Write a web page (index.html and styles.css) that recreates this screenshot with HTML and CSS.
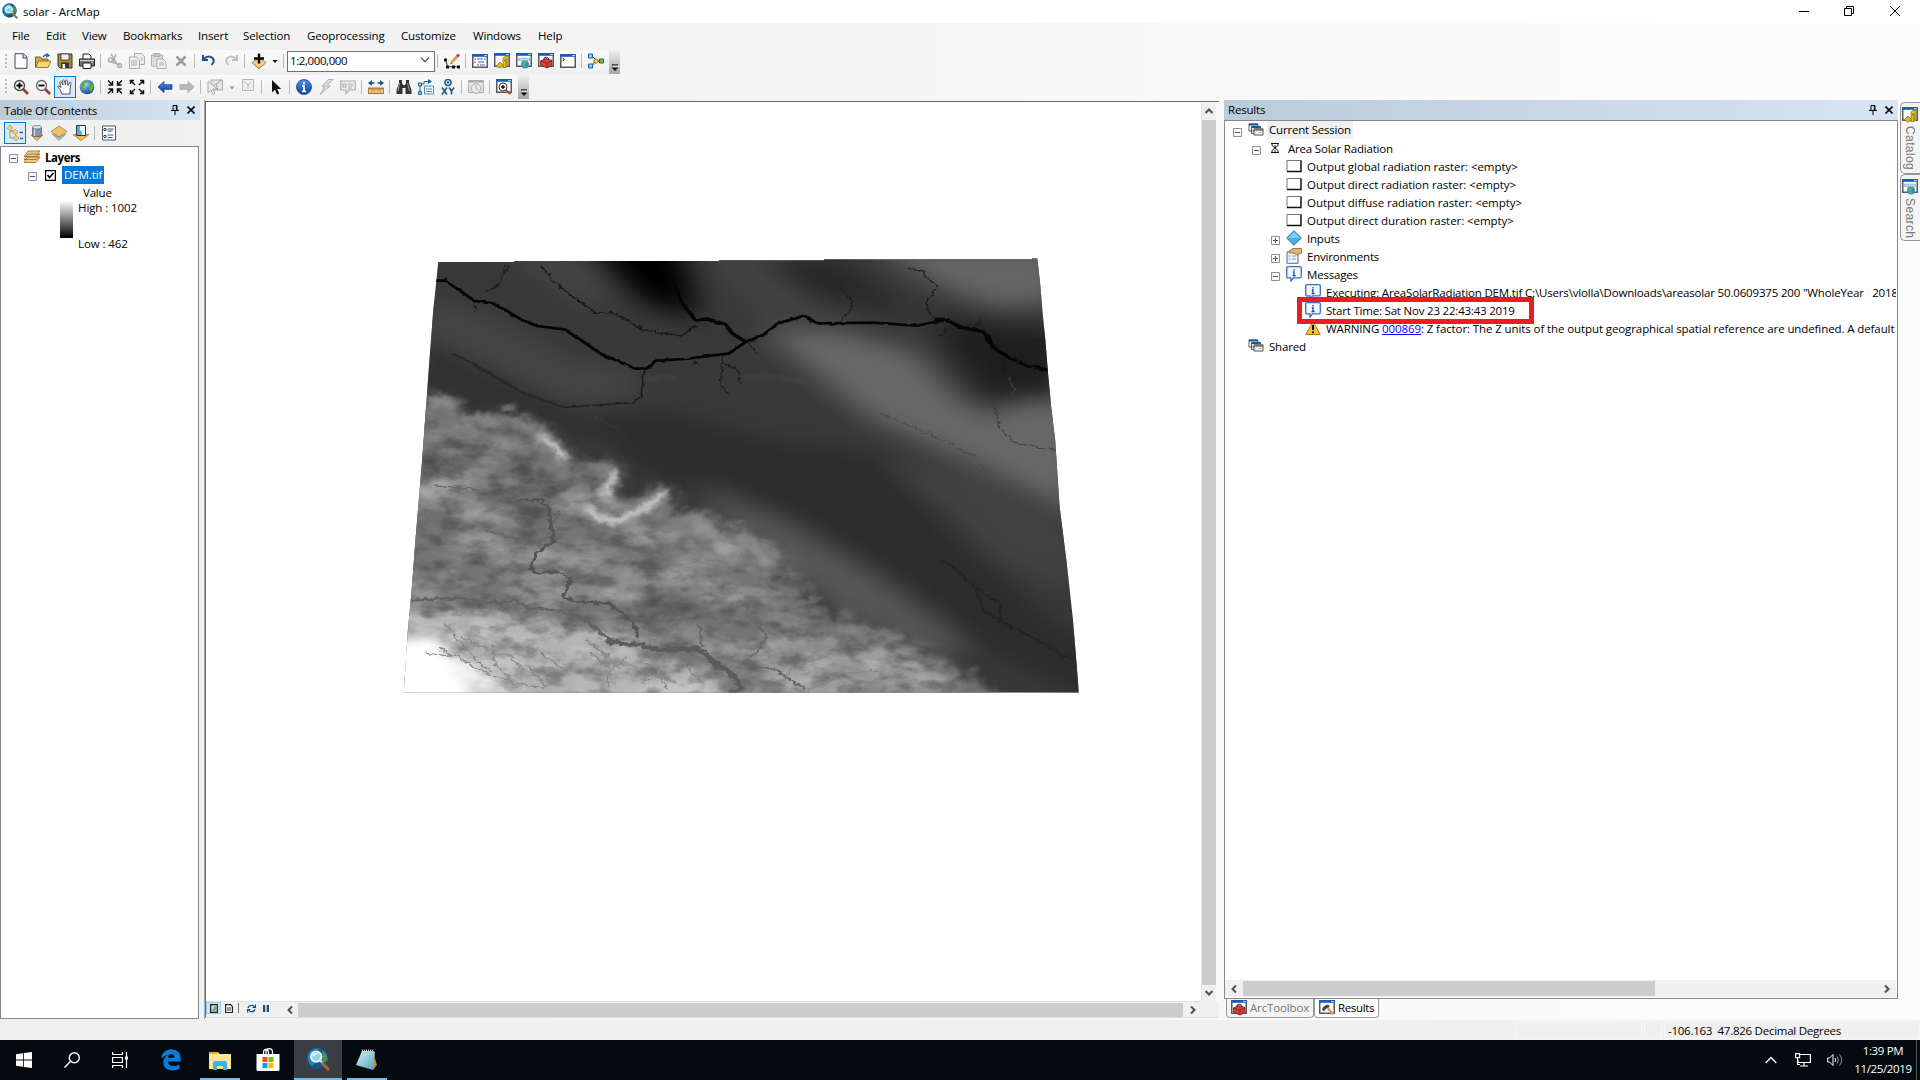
FILE: index.html
```html
<!DOCTYPE html>
<html lang="en">
<head>
<meta charset="utf-8">
<title>solar - ArcMap</title>
<link rel="stylesheet" href="styles.css">
</head>
<body>
<svg class="defs" width="0" height="0">
<defs>
<radialGradient id="sea" cx=".35" cy=".3" r=".8"><stop offset="0" stop-color="#b5def7"/><stop offset=".5" stop-color="#3f83cc"/><stop offset="1" stop-color="#153f86"/></radialGradient>
<linearGradient id="blue" x1="0" y1="0" x2="0" y2="1"><stop offset="0" stop-color="#4d8ee6"/><stop offset="1" stop-color="#0d3fa8"/></linearGradient>
<linearGradient id="note" x1="0" y1="0" x2="1" y2="1"><stop offset="0" stop-color="#d8f0f4"/><stop offset="1" stop-color="#4aa4b8"/></linearGradient>
<symbol id="arcmap" viewBox="0 0 16 16"><circle cx="7.500" cy="7.500" r="7.200" fill="#12588f"/><path d="M2 4q3-4 7-3l-2 3 1 3-3 1 1 3-2 2q-4-4-2-9z" fill="#2386b0"/><path d="M11 2q4 3 3 7l-3 2z" fill="#3f9a48"/><circle cx="6.800" cy="6.400" r="3.500" fill="#8fd0e6" stroke="#e8f2f6" stroke-width="1.300"/><path d="M4.800 6q1-2 3-1.500" stroke="#fff" fill="none"/><path d="M9.500 9l1.500 1.700" stroke="#ddd" stroke-width="1.600"/><path d="M11 11l3.800 3.800" stroke="#b5642c" stroke-width="2" stroke-linecap="round"/></symbol>
<symbol id="globe" viewBox="0 0 16 16"><circle cx="8" cy="8" r="7.300" fill="url(#sea)"/><path d="M3 3.500q3-2.500 5-2l.5 2-3 1 .5 2-2.500 1.500.5 3-1.500 0q-2-4 .5-7.500zM10 6l3.500-1.500 1.500 3q0 3-3 5.500l-2-3z" fill="#6aa82e"/></symbol>
<symbol id="win" viewBox="0 0 16 14"><path d="M.75.75h14.5v12.5H.75z" fill="#fff" stroke="#5a5a5a" stroke-width="1.500"/><path d="M0 0h16v2.800H0z" fill="#1c5bb5"/><path d="M12 1h3v1h-3z" fill="#a9cdf5"/></symbol>
<symbol id="catalog" viewBox="0 0 16 16"><use href="#win" width="16" height="14"/><path d="M9 5l2-1.500h3V13l-2 1.500H9z" fill="#e2c420" stroke="#8a7508" stroke-width=".7"/><path d="M12 6v8M10 7.500h1.500" stroke="#7c6808"/><path d="M2 13l4-4 4 4-4 2z" fill="#d6bc1c" stroke="#7c6808" stroke-width=".7"/></symbol>
<symbol id="search" viewBox="0 0 16 16"><use href="#win" width="16" height="14"/><path d="M2 5h12v2.500H2z" fill="#b9d5ee" stroke="#799cbd" stroke-width=".5"/><circle cx="9" cy="11.500" r="4" fill="#2f8fc2"/><path d="M6 11q2-4 5-2l-2 2 1 3q-3 1-4-3z" fill="#5cb858"/></symbol>
<symbol id="toolbox" viewBox="0 0 16 16"><use href="#win" width="16" height="14"/><path d="M2.500 8l5.500-2.500 6 2v5L9 15l-6.500-3z" fill="#d0463c" stroke="#7b1712" stroke-width=".8"/><path d="M2.500 8L9 10.200 14 7.500M9 10.500V15" fill="none" stroke="#7b1712" stroke-width=".8"/><path d="M6 7V5l2.500-.8 2 1V7" fill="none" stroke="#661410"/></symbol>
<symbol id="results" viewBox="0 0 16 16"><use href="#win" width="16" height="14"/><path d="M8 7l6 7.500" stroke="#d29a5c" stroke-width="2.600"/><path d="M3 9.500q1-4 6-5l2 2-4 2-2 3z" fill="#444"/></symbol>
<symbol id="stack" viewBox="0 0 16 16"><path d="M1 2h9v7H1zM3.500 4.500h9v7h-9z" fill="#fff" stroke="#555"/><path d="M1 1.500h9v2H1zM3.500 4h9v2h-9z" fill="#1b5799"/><path d="M6 7h9v6H6z" fill="#eee" stroke="#555"/><path d="M6 6.500h9v2H6zM11 10.500h2" fill="#777" stroke="#777" stroke-width=".7"/></symbol>
<symbol id="msg" viewBox="0 0 16 16"><path d="M2 .7h12q1.300 0 1.300 1.300v8.500q0 1.300-1.300 1.300H7.500L5 15v-3.200H2Q.7 11.800.7 10.500V2Q.7.700 2 .7z" fill="#f4f9ff" stroke="#356fc0" stroke-width="1.300"/><path d="M8 3v1.500M6.800 6H8v3.500M6.500 9.700h3.200" stroke="#174a9a" stroke-width="1.300" fill="none"/></symbol>
<symbol id="minus" viewBox="0 0 9 9"><path d="M.5.5h8v8h-8z" fill="#fafafa" stroke="#919191"/><path d="M2 4.500h5" stroke="#3c55a8"/></symbol>
<symbol id="plus" viewBox="0 0 9 9"><path d="M.5.5h8v8h-8z" fill="#fafafa" stroke="#919191"/><path d="M2 4.500h5M4.500 2v5" stroke="#3c55a8"/></symbol>
<symbol id="blank" viewBox="0 0 16 16"><path d="M1 2.500h14v11H1z" fill="#fff" stroke="#777"/><path d="M1 13.500h14v-11" fill="none" stroke="#111" stroke-width="1.300"/></symbol>
<symbol id="pin" viewBox="0 0 8 10"><path d="M2 .5h4v5H2zM0 5.500h8M4 6v4M5.300 1v4" stroke="#000" fill="none"/></symbol>
<symbol id="close" viewBox="0 0 8 8"><path d="M.5.5l7 7M7.500.5l-7 7" stroke="#000" stroke-width="1.600"/></symbol>
<symbol id="left" viewBox="0 0 6 8"><path d="M5 .5L1.500 4 5 7.500" fill="none" stroke="#505050" stroke-width="2"/></symbol>
<symbol id="right" viewBox="0 0 6 8"><path d="M1 .5L4.500 4 1 7.500" fill="none" stroke="#505050" stroke-width="2"/></symbol>
<symbol id="diamond" viewBox="0 0 16 16"><path d="M1 9l7 6.500L15 9 8 12z" fill="#b8b8b8" stroke="#777" stroke-width=".6"/><path d="M0 6.500L8 1l8 5.500L8 12z" fill="#f0c068" stroke="#9a7430" stroke-width=".7"/></symbol>
<symbol id="kite" viewBox="0 0 16 16"><path d="M1 9.500l7-4.500 7 4.500-7 6z" fill="#f3cf85" stroke="#9a7430" stroke-width=".8"/><path d="M2.500 11L8 15.500l5.500-4.500" fill="none" stroke="#b98430"/></symbol>
<symbol id="overflow" viewBox="0 0 11 24"><path d="M3 15h6" stroke="#111" stroke-width="1.300"/><path d="M2.500 17.500h7L6 21z" fill="#111"/><path d="M4 16h6" stroke="#fff" stroke-width=".7"/></symbol>
</defs>
</svg>
<div class="app">
<header class="title"><svg width="16" height="16"><use href="#arcmap"/></svg><span class="title-text">solar - ArcMap</span>
<div class="window-buttons"><svg width="120" height="20" viewBox="0 0 120 20" fill="none" stroke="#000"><path d="M14 10.500h10M59.500 7.500h7v7h-7zM61.500 7V5.500h7v7H67M105 5l10 10M115 5l-10 10"/></svg></div></header>
<nav class="menu"><span>File</span><span>Edit</span><span>View</span><span>Bookmarks</span><span>Insert</span><span>Selection</span><span>Geoprocessing</span><span>Customize</span><span>Windows</span><span>Help</span></nav>
<div class="toolbar tb-standard">
<i class="grip"></i>
<b class="tool"><svg viewBox="0 0 16 16"><path d="M2 .7h8.500L14 4v11.300H2z" fill="#fdfdff" stroke="#3e4a5e"/><path d="M10 1v4h4" fill="#cbdcf2" stroke="#3e4a5e"/></svg></b>
<b class="tool"><svg viewBox="0 0 16 16"><path d="M.5 14V4h5l1.500 2h6v3" fill="#d6a93c" stroke="#80601a"/><path d="M.7 14.500L3.500 8H16l-3 6.500z" fill="#f5d678" stroke="#80601a" stroke-width=".8"/><path d="M8 4q2-3 5-1.500M11.500.5l2.500 2-3 1.500" stroke="#22649e" fill="none" stroke-width="1.300"/></svg></b>
<b class="tool"><svg viewBox="0 0 16 16"><path d="M1 1h14v14H3l-2-2z" fill="#a78c30" stroke="#333"/><path d="M4 1h8v6H4z" fill="#f2f2f2" stroke="#333" stroke-width=".8"/><path d="M4 9.500h8V15H4z" fill="#333"/><path d="M5.500 11h2.500v4H5.500z" fill="#fff"/></svg></b>
<b class="tool"><svg viewBox="0 0 16 16"><path d="M4 6V1h6l2 2v3" fill="#fff" stroke="#222"/><path d="M.5 6h15v7H.5z" fill="#777" stroke="#222"/><path d="M4 10h8v5.500H4z" fill="#fff" stroke="#222"/><path d="M1 7.500h14" stroke="#ddd"/><path d="M12 9.500h2" stroke="#8e8"/></svg></b>
<i class="sep"></i>
<b class="tool"><svg viewBox="0 0 16 16" fill="none" stroke="#b0b0b0" stroke-width="1.500"><path d="M4 1l6 10M9 1L6 9M2 8l11 4"/><circle cx="3.500" cy="7" r="2"/><circle cx="12.500" cy="12.500" r="2"/></svg></b>
<b class="tool"><svg viewBox="0 0 16 16" fill="#eee" stroke="#adadad"><path d="M5.500.5h7l3 3v8h-10z"/><path d="M.5 4h7l3 3v8.500H.5zM2 8h6M2 10h6M2 12h6M12 5h2M12 7h2"/></svg></b>
<b class="tool"><svg viewBox="0 0 16 16" fill="#ddd" stroke="#adadad"><path d="M.5 2h11v11H.5zM3 .5h6v3H3z"/><path d="M6 6h6l3 3v6.500H6zM8 10h5M8 12h5" fill="#eee"/></svg></b>
<b class="tool"><svg viewBox="0 0 16 16"><path d="M3.500 3.500l9 9M12.500 3.500l-9 9" stroke="#9b9b9b" stroke-width="2.600"/></svg></b>
<i class="sep"></i>
<b class="tool"><svg viewBox="0 0 16 16" fill="none" stroke="#1a5590" stroke-width="2"><path d="M2.500 6q5-4.500 9-1 3 3-1 7M2 2v5h5"/></svg></b>
<b class="tool"><svg viewBox="0 0 16 16" fill="none" stroke="#c2c2c2" stroke-width="2"><path d="M13.500 6q-5-4.500-9-1-3 3 1 7M14 2v5H9"/></svg></b>
<i class="sep"></i>
<b class="tool"><svg viewBox="0 0 16 16"><use href="#kite"/><path d="M8 .5v10M3 5.500h10" stroke="#000" stroke-width="2.400"/></svg></b>
<b class="drop"><svg viewBox="0 0 8 16"><path d="M1.500 7h5L4 10z" fill="#000"/></svg></b>
<i class="sep sep-wide"></i>
<div class="combo"><span>1:2,000,000</span><svg width="10" height="6" viewBox="0 0 10 6"><path d="M1 .7l4 4 4-4" fill="none" stroke="#444" stroke-width="1.200"/></svg></div>
<i class="sep"></i>
<b class="tool"><svg viewBox="0 0 16 16"><path d="M2 7l1.500 7 6-.5L14 14" fill="none" stroke="#333"/><path d="M0 5.500h3v3H0zM2 12.500h3v3H2zM8 12.500h3v3H8zM13 12.500h3v3h-3z" fill="#111"/><path d="M7.500 9.500l6-6.500" stroke="#d7a13c" stroke-width="2.600"/><path d="M13 3.500l2-2" stroke="#b54040" stroke-width="2.600"/><path d="M6 11.500l1-2 1 1z" fill="#222"/></svg></b>
<i class="sep"></i>
<b class="tool"><svg viewBox="0 0 16 16"><use href="#win" y="1" width="16" height="14"/><path d="M2 6h2M2 9h2M5 12h2" stroke="#c33"/><path d="M5 6h6M6 9h6M8 12h5M12 6h2" stroke="#2866b4"/></svg></b>
<b class="tool"><svg><use href="#catalog"/></svg></b>
<b class="tool"><svg><use href="#search"/></svg></b>
<b class="tool"><svg><use href="#toolbox"/></svg></b>
<b class="tool"><svg viewBox="0 0 16 16"><use href="#win" y="1" width="16" height="14"/><path d="M2.500 5l2 1.500-2 1.500" fill="none" stroke="#111"/></svg></b>
<i class="sep"></i>
<b class="tool"><svg viewBox="0 0 16 16"><path d="M4 3l4 4-4 6M8 8h4" fill="none" stroke="#333"/><path d="M.5 1h4v4h-4zM.5 11h4v4h-4z" fill="#8ed0f3" stroke="#1763a6"/><path d="M5.500 8L8 5.500 10.500 8 8 10.500z" fill="#f4d343" stroke="#8e6914"/><path d="M11.500 6h4v4h-4z" fill="#69bd44" stroke="#2b6e19"/></svg></b>
<i class="overflow"><svg width="11" height="24"><use href="#overflow"/></svg></i>
</div>
<div class="toolbar tb-tools">
<i class="grip"></i>
<b class="tool"><svg viewBox="0 0 16 16"><path d="M9.500 9.500L15 15" stroke="#9b3c28" stroke-width="2.600"/><circle cx="6.500" cy="6.500" r="5" fill="#f4f4f4" stroke="#444" stroke-width="1.300"/><path d="M3.500 6.500h6M6.500 3.500v6" stroke="#000" stroke-width="1.800"/></svg></b>
<b class="tool"><svg viewBox="0 0 16 16"><path d="M9.500 9.500L15 15" stroke="#9b3c28" stroke-width="2.600"/><circle cx="6.500" cy="6.500" r="5" fill="#f4f4f4" stroke="#666" stroke-width="1.300"/><path d="M3.500 6.500h6" stroke="#000" stroke-width="1.800"/></svg></b>
<b class="tool on"><svg viewBox="0 0 16 16"><path d="M5 15L3 10.500.700 8q0-1.500 1.500-1L4 8.500 2.800 3q.7-1.500 1.700 0L6 6 5.500 1.500q.8-1.200 1.800 0L8.500 6l.3-4.500q1-1 1.700.3L11 6.500l1.500-3q1.300-.7 1.500.7L13 10v5z" fill="#fff" stroke="#444" stroke-width=".9"/></svg></b>
<b class="tool"><svg><use href="#globe"/></svg></b>
<i class="sep"></i>
<b class="tool"><svg viewBox="0 0 16 16" stroke="#111" stroke-width="1.500" fill="none"><path d="M1 1.500l4 4M5.500 2v4h-4M15 1.500l-4 4M10.500 2v4h4M1 14.500l4-4M5.500 14v-4h-4M15 14.500l-4-4M10.500 14v-4h4"/></svg></b>
<b class="tool"><svg viewBox="0 0 16 16" stroke="#111" stroke-width="1.500" fill="none"><path d="M2 2l4 4M1.500 5V1.500H5M14 2l-4 4M14.500 5V1.500H11M2 14l4-4M1.500 11v3.500H5M14 14l-4-4M14.500 11v3.500H11"/></svg></b>
<i class="sep"></i>
<b class="tool"><svg viewBox="0 0 16 16"><path d="M1 8l6-5.500v3.200h8v4.600H7v3.200z" fill="url(#blue)" stroke="#123c94" stroke-width=".8"/></svg></b>
<b class="tool"><svg viewBox="0 0 16 16"><path d="M15 8L9 2.500v3.200H1v4.600h8v3.200z" fill="#b7b7b7" stroke="#a3a3a3" stroke-width=".8"/></svg></b>
<i class="sep"></i>
<b class="tool"><svg viewBox="0 0 16 16" fill="#e5e5e5" stroke="#aaa"><path d="M4 1h11.500v10H4zM4 8l11-7M9 5l2 6"/><path d="M1 2v12l3-3 2 4.500 2-1L6 10h4z" fill="#eee"/></svg></b>
<b class="drop drop-wide"><svg viewBox="0 0 8 16"><path d="M1.500 7.500h5l-2.500 3z" fill="#999"/></svg></b>
<b class="tool"><svg viewBox="0 0 16 16" fill="#efefef" stroke="#b5b5b5"><path d="M2.500.5h11v11h-11zM4 2l4 4 3-3M8 6v4"/></svg></b>
<i class="sep"></i>
<b class="tool"><svg viewBox="0 0 16 16"><path d="M4 1v12.500l3-2.800 2 4.800 2.200-1-2-4.500h4z" fill="#111"/></svg></b>
<i class="sep"></i>
<b class="tool"><svg viewBox="0 0 16 16"><circle cx="8" cy="8" r="7.500" fill="url(#blue)" stroke="#143f8c" stroke-width=".8"/><path d="M8 3v2.200M6 7h2v5M6 12.300h4" stroke="#fff" stroke-width="1.800" fill="none"/></svg></b>
<b class="tool"><svg viewBox="0 0 16 16"><path d="M10 .5L4 7.500h3L2 15.500 12 7H9l6-6.500z" fill="#ddd" stroke="#b0b0b0"/></svg></b>
<b class="tool"><svg viewBox="0 0 16 16" fill="#eee" stroke="#adadad" stroke-width="1.200"><path d="M.7 2h14.600v9H9l-3 3.500V11H.7zM3 5h3v3H3zM8 5h5M8 7h5M8 9h4"/></svg></b>
<i class="sep"></i>
<b class="tool"><svg viewBox="0 0 16 16"><path d="M0 9h16v5.500H0z" fill="#d49a50" stroke="#80501d" stroke-width=".7"/><path d="M2 11v3M5 12v2M8 11v3M11 12v2M14 11v3" stroke="#fff"/><path d="M1 4h5.500M9.500 4H15" stroke="#145a91" stroke-width="1.500"/><path d="M0 4l4-3v6zM16 4l-4-3v6z" fill="#145a91"/></svg></b>
<i class="sep"></i>
<b class="tool"><svg viewBox="0 0 16 16"><path d="M3 1h3v3l1 2h2l1-2V1h3v3l2.500 7v4h-6V9h-3v6h-6v-4L3 4z" fill="#333"/><path d="M3.500 4L2 12M11.500 4l2 8" stroke="#999"/></svg></b>
<b class="tool"><svg viewBox="0 0 16 16"><path d="M2 14V5h4V2.500h6" fill="none" stroke="#1c6292"/><path d="M10 0l4 2.500L10 5z" fill="#1c6292"/><path d="M.5 12.500h3v3h-3zM.5 4h3v3h-3z" fill="#9bd2f0" stroke="#1c6292"/><path d="M6.500 7h9v8h-9zM8 10h6M8 12.500h6" fill="#f0f8ff" stroke="#5491b8"/></svg></b>
<b class="tool"><svg viewBox="0 0 16 16" fill="none" stroke="#1a5c90" stroke-width="1.600"><circle cx="8" cy="3.500" r="3"/><circle cx="8" cy="3.500" r=".5"/><path d="M2 8.500l5 7M7 8.500l-5 7M9 8.500l2.500 3.500L14 8.500M11.500 12v3.500"/></svg></b>
<i class="sep"></i>
<b class="tool"><svg viewBox="0 0 16 16" fill="#e8e8e8" stroke="#ababab"><path d="M.7 1.500h14.600v12H.7z"/><path d="M0 2.500h16" stroke-width="2"/><circle cx="8" cy="9.500" r="4.800"/><path d="M8 6.500v3l2.500 1.500" fill="none"/></svg></b>
<i class="sep"></i>
<b class="tool"><svg viewBox="0 0 16 16"><use href="#win" width="16" height="14"/><circle cx="7" cy="8" r="4" fill="#fff" stroke="#333"/><path d="M5 8h4M7 6v4" stroke="#111" stroke-width="1.400"/><path d="M10 11l4.500 4" stroke="#a3462d" stroke-width="2"/></svg></b>
<i class="overflow overflow-far"><svg width="11" height="24"><use href="#overflow"/></svg></i>
</div>
<main class="workspace">
<section class="toc">
<div class="panel-head"><span>Table Of Contents</span><svg class="pin" width="8" height="10"><use href="#pin"/></svg><svg width="8" height="8"><use href="#close"/></svg></div>
<div class="toc-tools">
<b class="tool on"><svg viewBox="0 0 16 16"><path d="M3 4v9h5M3 6h5" fill="none" stroke="#888"/><path d="M0 3l3-3 3 3-3 3zM5 7l3-3 3 3-3 3zM6 13l3-3 3 3-3 3z" fill="#f4c878" stroke="#b98a39" stroke-width=".6"/><path d="M12.500 7.500H16M13 13.500h3" stroke="#1c66aa" stroke-width="1.400"/></svg></b>
<b class="tool"><svg viewBox="0 0 16 16"><path d="M2 10h12l-6 5.700z" fill="#eebd5e" stroke="#9a7430" stroke-width=".7"/><path d="M3.500 2v9q4.500 2 9 0V2z" fill="#8492aa" stroke="#4c596d" stroke-width=".7"/><path d="M5.500 4v7" stroke="#c5cfdd" stroke-width="1.500"/><ellipse cx="8" cy="2.200" rx="4.500" ry="1.800" fill="#dce4ee" stroke="#4c596d" stroke-width=".6"/></svg></b>
<b class="tool"><svg><use href="#diamond"/></svg></b>
<b class="tool"><svg viewBox="0 0 16 16"><path d="M0 9.500h16l-8 6.200z" fill="#eebd5e" stroke="#9a7430" stroke-width=".7"/><path d="M3.500.5h9v10h-9z" fill="#4ab8d6" stroke="#333"/><path d="M7 1h5v9H9V7L7 5z" fill="#e8fbff"/></svg></b>
<i class="sep sep-toc"></i>
<b class="tool"><svg viewBox="0 0 16 16"><path d="M1.500 1h13v14h-13z" fill="#fff" stroke="#475c78"/><path d="M6.500 4h6M6.500 6h5M6.500 10h6M6.500 12.500h5" stroke="#335b8b"/><circle cx="4" cy="4.500" r="1.200" fill="none" stroke="#222"/><circle cx="4" cy="11.500" r="1.200" fill="none" stroke="#222"/></svg></b>
</div>
<div class="toc-tree">
<div class="toc-row"><svg class="exp" width="9" height="9"><use href="#minus"/></svg><svg class="ico" width="16" height="14" viewBox="0 0 16 14"><path d="M4 7h12l-4 5.500H0zM4 4h12l-4 5.500H0zM4 1h12l-4 5.500H0z" fill="#f2cb83" stroke="#96692b" stroke-width=".8"/></svg><strong>Layers</strong></div>
<div class="toc-row toc-child"><svg class="exp" width="9" height="9"><use href="#minus"/></svg><svg class="ico check" width="11" height="11" viewBox="0 0 11 11"><path d="M.6.6h9.800v9.800H.6z" fill="#fff" stroke="#000" stroke-width="1.200"/><path d="M2.500 5l2 2.500L8.500 3" fill="none" stroke="#000" stroke-width="1.500"/></svg><span class="selected">DEM.tif</span></div>
<div class="legend-value">Value</div>
<div class="legend"><i class="ramp"></i><div class="ramp-labels"><span>High : 1002</span><span>Low : 462</span></div></div>
</div>
</section>
<section class="map">
<div class="map-row">
<div class="canvas">
<svg class="dem" width="700" height="470" viewBox="0 0 1568 1410" preserveAspectRatio="none">
<defs>
<clipPath id="edge"><path d="M108 66H278V63H737V61H972V58H1438V55H1450L1457 140 1462 220 1468 300 1474 400 1481 500 1490 600 1500 800 1515 960 1530 1140 1543 1358H31L40 1170 48 1060 57 900 72 660 90 330 97 210 104 120Z"/></clipPath>
<filter id="b40" color-interpolation-filters="sRGB" x="-40%" y="-40%" width="180%" height="180%"><feGaussianBlur stdDeviation="34"/></filter>
<filter id="b15" color-interpolation-filters="sRGB" x="-30%" y="-30%" width="160%" height="160%"><feGaussianBlur stdDeviation="16"/></filter>
<filter id="rough" color-interpolation-filters="sRGB" filterUnits="userSpaceOnUse" x="0" y="0" width="1568" height="1410"><feGaussianBlur stdDeviation="18" result="b"/><feTurbulence type="fractalNoise" baseFrequency=".018" numOctaves="5" seed="8"/><feDisplacementMap in="b" scale="85" xChannelSelector="R" yChannelSelector="G"/></filter>
<filter id="ridge" color-interpolation-filters="sRGB" filterUnits="userSpaceOnUse" x="0" y="0" width="1568" height="1410"><feGaussianBlur stdDeviation="7" result="b"/><feTurbulence type="fractalNoise" baseFrequency=".04" numOctaves="3" seed="5"/><feDisplacementMap in="b" scale="24" xChannelSelector="R" yChannelSelector="G"/></filter>
<filter id="glow" color-interpolation-filters="sRGB" filterUnits="userSpaceOnUse" x="0" y="0" width="1568" height="1410"><feGaussianBlur stdDeviation="16" result="b"/><feTurbulence type="fractalNoise" baseFrequency=".03" numOctaves="4" seed="4"/><feDisplacementMap in="b" scale="45" xChannelSelector="R" yChannelSelector="G"/></filter>
<filter id="wiggle" color-interpolation-filters="sRGB" filterUnits="userSpaceOnUse" x="0" y="0" width="1568" height="1410"><feTurbulence type="fractalNoise" baseFrequency=".07" numOctaves="3" seed="2" result="n"/><feDisplacementMap in="SourceGraphic" in2="n" scale="18" xChannelSelector="R" yChannelSelector="G"/></filter>
<filter id="bend" color-interpolation-filters="sRGB" filterUnits="userSpaceOnUse" x="0" y="0" width="1568" height="1410"><feTurbulence type="fractalNoise" baseFrequency=".05" numOctaves="2" seed="2" result="n"/><feDisplacementMap in="SourceGraphic" in2="n" scale="8" xChannelSelector="R" yChannelSelector="G"/></filter>
<filter id="cloud" color-interpolation-filters="sRGB" filterUnits="userSpaceOnUse" x="0" y="0" width="1568" height="1410"><feGaussianBlur in="SourceGraphic" stdDeviation="26" result="s"/><feTurbulence type="fractalNoise" baseFrequency=".007 .012" numOctaves="6" seed="11"/><feColorMatrix values="0 0 0 0 1  0 0 0 0 1  0 0 0 0 1  2.600 0 0 0 -1"/><feComposite in2="s" operator="in"/></filter>
<filter id="shade" color-interpolation-filters="sRGB" filterUnits="userSpaceOnUse" x="0" y="0" width="1568" height="1410"><feGaussianBlur in="SourceGraphic" stdDeviation="26" result="s"/><feTurbulence type="fractalNoise" baseFrequency=".018 .025" numOctaves="6" seed="21"/><feColorMatrix values="0 0 0 0 .2  0 0 0 0 .2  0 0 0 0 .2  0 3 0 0 -1.300"/><feComposite in2="s" operator="in"/></filter>
</defs>
<g clip-path="url(#edge)">
<path d="M0 0H1568V1410H0z" fill="#393939"/>
<g filter="url(#b40)">
<path d="M60 170L200 220 420 370 560 390 540 480 400 490 250 390 60 270z" fill="#454545"/>
<path d="M250 20H430L520 190 400 180z" fill="#444"/>
<path d="M440 0H650L690 240 560 180z" fill="#000"/>
<path d="M690 20H790L900 140 1100 230 820 220z" fill="#434343"/>
<path d="M850 60H1000L1180 230 960 180z" fill="#262626"/>
<path d="M1080 20H1500V190L1350 200 1220 130z" fill="#666"/>
<path d="M1210 230L1500 270V480L1340 480 1270 370z" fill="#1e1e1e"/>
<path d="M830 265L1000 270 1180 340 1260 460 1340 530 1400 480 1540 470V820L1320 680 1080 540z" fill="#686868"/>
<path d="M430 510L640 520 850 600 1100 640 1290 900 1480 1140 1600 1230V1400L1330 1230 1180 1080 850 860 560 690z" fill="#2c2c2c"/>
<path d="M1100 660L1300 700 1540 850V1050L1350 960z" fill="#424242"/>
<path d="M680 720L900 850 1100 1010 1300 1220 1220 1250 1000 1100 800 920z" fill="#585858"/>
</g>
<path d="M90 320L240 420 390 500 520 590 400 600 250 540 80 440z" fill="#313131" filter="url(#b15)" opacity=".9"/>
<g filter="url(#rough)">
<path d="M20 480L130 480 190 550 300 550 370 610 430 700 520 790 640 790 760 880 850 940 930 1060 990 1130 1130 1180 1220 1250 1310 1330 1440 1420H0V480z" fill="#747474"/>
<path d="M60 640L310 630 350 740 250 770 80 710z" fill="#565656"/>
<path d="M230 780L340 790 340 870 230 850zM470 1110L620 1050 700 1100 600 1160z" fill="#646464"/>
<path d="M20 1130L240 1110 430 1180 600 1270 740 1300 770 1420H20z" fill="#b0b0b0"/>
<path d="M830 1210L1100 1210 1210 1290 1290 1420H820z" fill="#909090"/>
<path d="M440 990L560 960 560 1070 440 1070zM640 810L700 820 820 900 840 960 700 930zM60 700L160 720 180 790 60 800z" fill="#8d8d8d"/>
</g>
<g filter="url(#glow)" fill="none" stroke="#8e8e8e"><path d="M80 490L140 490M160 560L240 540 300 550 360 610 400 690M420 690H500L480 770 430 780M460 800Q500 850 600 780L605 740" stroke-width="34"/></g>
<path d="M20 580L200 560 420 700 560 820 850 920 1010 1120 1220 1240 1360 1410H0z" fill="#fff" filter="url(#cloud)" opacity=".28"/>
<path d="M70 500L350 600 520 820 800 920 1010 1120 1220 1240 1360 1410H200L110 1220 40 1150z" fill="#333" filter="url(#shade)" opacity=".4"/>
<path d="M0 1200L100 1190 130 1270 180 1330 200 1430H0z" fill="#fff" filter="url(#b15)"/>
<path d="M0 1150L140 1180 250 1300 300 1430H0z" fill="#fff" filter="url(#cloud)" opacity=".8"/>
<g fill="none" filter="url(#ridge)" stroke="#b4b4b4">
<path d="M90 485Q130 475 145 500M165 545Q200 520 230 540M250 505l30-5" stroke-width="13" stroke="#8c8c8c"/>
<path d="M330 590Q380 610 390 660M505 690Q500 740 470 765M440 790Q460 840 500 845 600 805 615 750" stroke-width="17" stroke="#b8b8b8"/>
<path d="M345 600Q385 615 390 660M502 700Q500 740 480 760M455 810Q465 840 495 842 595 800 610 752" stroke-width="7" stroke="#e0e0e0"/>
<path d="M770 905Q820 910 835 950M910 1100L960 1070M1060 1160L1150 1200" stroke-width="9" stroke="#8e8e8e"/>
</g>
<g fill="none" stroke="#666" filter="url(#wiggle)" stroke-linejoin="round">
<path d="M285 780H340L358 810 360 860 368 905 325 940 315 985 330 1000 370 995 405 1015 390 1070 410 1085 490 1090 530 1130 550 1160 555 1195" stroke-width="8" stroke="#545454"/>
<path d="M45 1080L150 1075 250 1090 280 1080 310 1105 380 1110 440 1140 490 1200 560 1215" stroke-width="9" stroke="#636363"/>
<path d="M490 1205L560 1215 600 1230 690 1225 730 1270 765 1300 790 1345 760 1358" stroke-width="13" stroke="#5b5b5b"/>
<path d="M790 1275L830 1220 845 1190 820 1150M690 1150L700 1220M790 1265L860 1290 930 1345M380 810L365 850M210 870L340 915M100 735L200 750" stroke-width="5"/>
<path d="M80 1240L150 1250 200 1290 280 1330 350 1345M140 1250L110 1220M220 1290L180 1240 120 1150M270 1320L230 1260 230 1210M490 1340L490 1250 440 1200M520 1290L490 1260M620 1350L600 1290 570 1270M700 1330L660 1270M880 1340L900 1280 1000 1240M940 1350L1010 1300 1100 1290M350 1340L310 1280M400 1300L340 1240M560 1330L600 1310M450 1240L490 1280M530 1250L490 1300M260 1240L300 1290M160 1190L220 1230M1060 1350L1100 1310M640 1330L600 1300" stroke-width="4" stroke="#888"/>
</g>
<g fill="none" stroke="#050505" filter="url(#bend)" stroke-linejoin="round">
<path d="M100 122L125 122 160 155 190 183 230 190 265 215 300 243 330 258 390 268 430 302 470 340 550 386 575 386 595 362 660 357 760 340 800 303 830 290 870 250 925 228 960 250 1080 248 1180 257 1240 240" stroke-width="8"/>
<path d="M655 190L685 240 710 237 750 252 770 285 795 303M1220 238H1245L1280 262 1330 275 1350 320 1390 355 1430 378 1475 390" stroke-width="10"/>
<path d="M630 110L655 190" stroke-width="6"/>
<path d="M570 390L562 470 545 488 390 502" stroke-width="4" stroke="#1c1c1c"/>
<path d="M390 502L300 460 210 390 140 340" stroke-width="7" stroke="#292929"/>
</g>
<g fill="none" filter="url(#wiggle)" stroke-linejoin="round">
<path d="M340 80L380 140 460 220 500 218 570 270 650 288 690 255" stroke-width="4" stroke="#171717"/>
<path d="M262 75L245 135 215 155M1008 245L1040 195 1010 140M1218 235L1200 190 1225 140 1190 95 1160 85M745 345L740 430 755 460M750 370L780 390 785 430M805 310L825 345M1410 365L1415 320 1465 290M1355 330L1345 370M1250 265L1230 285M1380 360L1375 395M1440 380L1445 405M1310 262L1320 240M190 190L188 215M680 360L690 380" stroke-width="3" stroke="#1b1b1b"/>
<path d="M1385 410L1400 450 1355 495 1365 560 1400 610 1490 630M1330 480L1350 500" stroke-width="3" stroke="#404040"/>
<path d="M1100 520L1240 600 1310 650 1350 720M440 510L510 570" stroke-width="2" stroke="#444"/>
<path d="M1240 960L1310 1040 1370 1095 1365 1140 1450 1200 1510 1250 1540 1253M1310 1045L1330 1110 1370 1145" stroke-width="4" stroke="#202020"/>
</g>
<path d="M580 420Q620 400 650 420M790 415Q840 400 940 430" fill="none" stroke="#4c4c4c" stroke-width="6" filter="url(#ridge)"/>
</g>
</svg>
</div>
<div class="vscroll"><svg width="8" height="6" viewBox="0 0 8 6"><path d="M.5 5L4 1.500 7.500 5" fill="none" stroke="#505050" stroke-width="2"/></svg><i class="vthumb"></i><svg width="8" height="6" viewBox="0 0 8 6"><path d="M.5 1L4 4.500 7.500 1" fill="none" stroke="#505050" stroke-width="2"/></svg></div>
</div>
<div class="map-foot">
<b class="view-on"><svg width="8" height="9" viewBox="0 0 8 9"><path d="M.6.6h6.800v7.800H.6z" fill="#c9df8e" stroke="#222" stroke-width="1.200"/><path d="M5 2l2 2-2 3H2z" fill="#6aa5ae"/></svg></b>
<svg class="page-ico" width="8" height="9" viewBox="0 0 8 9"><path d="M.6.600h5L7.400 2.500v6H.6z" fill="#fff" stroke="#222" stroke-width="1.200"/><path d="M2 4h4M2 6h4" stroke="#223c63"/></svg>
<i class="foot-sep"></i>
<svg class="refresh" width="9" height="9" viewBox="0 0 9 9" fill="none" stroke="#1c4e80" stroke-width="1.200"><path d="M1 4q1-3.500 5-2.500l1.500 1.500M8.500.5v3h-3M8 5q-1 3.500-5 2.500L1.500 6M.5 8.500v-3h3"/></svg>
<svg class="pause" width="6" height="7" viewBox="0 0 6 7"><path d="M0 0h2.300v7H0zM3.700 0H6v7H3.700z" fill="#1c4e80"/></svg>
<svg class="foot-left" width="6" height="8"><use href="#left"/></svg>
<i class="hthumb"></i>
<svg class="foot-right" width="6" height="8"><use href="#right"/></svg>
</div>
</section>
<section class="results">
<div class="panel-head"><span>Results</span><svg class="pin" width="8" height="10"><use href="#pin"/></svg><svg width="8" height="8"><use href="#close"/></svg></div>
<div class="res-box">
<div class="res-tree">
<div class="row l0"><svg class="exp" width="9" height="9"><use href="#minus"/></svg><svg class="ri"><use href="#stack"/></svg><span class="focus">Current Session</span></div>
<div class="row l1"><svg class="exp" width="9" height="9"><use href="#minus"/></svg><svg class="ri" viewBox="0 0 16 16"><path d="M4 3.500h8M4 12.500h8M5 4v1.500l6 5V12M11 4v1.500l-6 5V12M7 6h2M7 11h2" fill="none" stroke="#111"/></svg><span>Area Solar Radiation</span></div>
<div class="row l2"><i class="exp"></i><svg class="ri"><use href="#blank"/></svg><span class="output">Output global radiation raster: &lt;empty&gt;</span></div>
<div class="row l2"><i class="exp"></i><svg class="ri"><use href="#blank"/></svg><span class="output">Output direct radiation raster: &lt;empty&gt;</span></div>
<div class="row l2"><i class="exp"></i><svg class="ri"><use href="#blank"/></svg><span class="output">Output diffuse radiation raster: &lt;empty&gt;</span></div>
<div class="row l2"><i class="exp"></i><svg class="ri"><use href="#blank"/></svg><span class="output">Output direct duration raster: &lt;empty&gt;</span></div>
<div class="row l2"><svg class="exp" width="9" height="9"><use href="#plus"/></svg><svg class="ri" viewBox="0 0 16 16"><path d="M.7 8L8 .7 15.300 8 8 15.300z" fill="#4aaee0" stroke="#1f6fa5"/><path d="M2 8L8 2l6 6z" fill="#85cdf0"/></svg><span>Inputs</span></div>
<div class="row l2"><svg class="exp" width="9" height="9"><use href="#plus"/></svg><svg class="ri" viewBox="0 0 16 16"><path d="M1 4h11v11.300H1z" fill="#eef5fb" stroke="#576b80"/><path d="M2.500 8h2M2.500 11h2M6 8h4M6 11h4" stroke="#6ba4cf"/><path d="M3 3l4-2.500h8.500V5L11 7 8 5 4 5z" fill="#dfb56c" stroke="#72501d" stroke-width=".7"/></svg><span>Environments</span></div>
<div class="row l2"><svg class="exp" width="9" height="9"><use href="#minus"/></svg><svg class="ri"><use href="#msg"/></svg><span>Messages</span></div>
<div class="row l3"><i class="exp"></i><svg class="ri"><use href="#msg"/></svg><span class="executing">Executing: AreaSolarRadiation DEM.tif C:\Users\vlolla\Downloads\areasolar 50.0609375 200 "WholeYear&nbsp;&nbsp; 2018</span></div>
<div class="row l3 marked"><i class="exp"></i><svg class="ri"><use href="#msg"/></svg><span>Start Time: Sat Nov 23 22:43:43 2019</span></div>
<div class="row l3"><i class="exp"></i><svg class="ri" viewBox="0 0 16 16"><path d="M8 1.500L15.300 14.500H.7z" fill="#f7c13c" stroke="#b5761a"/><path d="M8 5v5M8 11.500v1.800" stroke="#000" stroke-width="1.900"/></svg><span class="warning">WARNING <a>000869</a>: Z factor: The Z units of the output geographical spatial reference are undefined. A default</span></div>
<div class="row l0"><i class="exp"></i><svg class="ri"><use href="#stack"/></svg><span>Shared</span></div>
</div>
<div class="res-scroll"><svg width="6" height="8"><use href="#left"/></svg><i class="res-thumb"></i><svg width="6" height="8"><use href="#right"/></svg></div>
</div>
<div class="tabs"><div class="tab"><svg width="16" height="16"><use href="#toolbox"/></svg><span>ArcToolbox</span></div><div class="tab active"><svg width="16" height="16"><use href="#results"/></svg><span>Results</span></div></div>
</section>
<aside class="dock"><div class="dock-tab cat"><svg width="16" height="16"><use href="#catalog"/></svg><span>Catalog</span></div><div class="dock-tab sea"><svg width="16" height="16"><use href="#search"/></svg><span>Search</span></div></aside>
</main>
<footer class="status"><i class="cell c1"></i><i class="cell c2"></i><div class="cell c3">-106.163&nbsp; 47.826 Decimal Degrees</div></footer>
<div class="taskbar">
<div class="task"><svg width="16" height="16" viewBox="0 0 16 16"><path d="M0 2.200L7 1.200V7.600H0zM7.800 1L16 0v7.600H7.800zM0 8.400h7v6.400L0 13.800zM7.800 8.400H16V16L7.800 15z" fill="#fff"/></svg></div>
<div class="task"><svg width="16" height="16" viewBox="0 0 16 16" fill="none" stroke="#fff" stroke-width="1.400"><circle cx="10.300" cy="5.700" r="5"/><path d="M6.700 9.300L.5 15.500"/></svg></div>
<div class="task"><svg width="17" height="16" viewBox="0 0 17 16" fill="none" stroke="#fff" stroke-width="1.200"><path d="M.6 0v2.500h9.800V0M.6 5.500h9.800v5H.6zM.6 16v-2.500h9.800V16M14.500 0v16"/><path d="M13 4.500h3v3h-3z" fill="#fff" stroke="none"/></svg></div>
<div class="task edge"><svg width="20" height="22" viewBox="0 0 20 22"><path d="M.3 9.500Q1.500.500 10 .3 19.700.500 19.700 10v2.500H7q.3 4.500 5.500 4.600 3 0 6-1.600v4.300Q15.500 21.500 11 21.500 2.500 21 2.300 13.500 2.300 8.500 6.500 6 3 6.500.3 9.500zM7 8.800h6.500Q13.200 5 10.200 5 7.300 5.200 7 8.800z" fill="#0a7bdc"/></svg></div>
<div class="task open"><svg width="22" height="19" viewBox="0 0 22 19"><path d="M0 1h9l1.500 2H22v15H0z" fill="#fde394"/><path d="M0 1h9v2H0z" fill="#e8af2d"/><path d="M4 19v-7q0-2 2-2h10q2 0 2 2v7h-4v-4H8v4z" fill="#3db1e5"/></svg></div>
<div class="task"><svg width="24" height="24" viewBox="0 0 24 24"><path d="M7.500 6V4.500Q7.500 1.500 10 1.500t2.500 3V6M10 6V3.500Q10.500.700 13 .7q3.500 0 3.500 3.800V6" stroke="#fff" stroke-width="1.300" fill="none"/><path d="M.5 6h23v15.500Q23.500 23 22 23H2Q.5 23 .5 21.500z" fill="#fff"/><path d="M6.500 9h5v5h-5z" fill="#f25022"/><path d="M12.500 9h5v5h-5z" fill="#7fba00"/><path d="M6.500 15h5v5h-5z" fill="#00a4ef"/><path d="M12.500 15h5v5h-5z" fill="#ffb900"/></svg></div>
<div class="task current"><svg width="24" height="24"><use href="#arcmap"/></svg></div>
<div class="task open pad"><svg width="24" height="22" viewBox="0 0 24 22"><path d="M18 3l4 13-4 5z" fill="#b98b4c"/><path d="M7 2h11l2 1-2 18L1 16z" fill="url(#note)"/><path d="M7 1.500h12" stroke="#ccc" stroke-width="2" stroke-dasharray="1 1"/></svg></div>
<div class="tray"><svg width="12" height="8" viewBox="0 0 12 8"><path d="M.7 7L6 1.500 11.300 7" fill="none" stroke="#fff" stroke-width="1.300"/></svg>
<svg width="16" height="14" viewBox="0 0 16 14"><path d="M4 1.500h11.400v8H3V7M9 9.500v3M5 13h8M.6.600h4v4h-4zM2.600 5v6.500H5" fill="none" stroke="#fff" stroke-width="1.200"/></svg>
<svg width="17" height="14" viewBox="0 0 17 14" fill="none" stroke="#fff"><path d="M.6 5h2l3.400-3.500v11L2.600 9h-2zM8 5q1.500 2 0 4"/><path d="M10 3.500q3 3.500 0 7M12.500 1.500q4.500 5.500 0 11" stroke="#999"/></svg>
<div class="clock"><span>1:39 PM</span><span>11/25/2019</span></div><i class="peek"></i></div>
</div>
</div>
</body>
</html>
```
FILE: styles.css
```css
*, *::after { box-sizing: border-box; }
body { margin: 0; font-family: "Open Sans", "Noto Sans", sans-serif; font-size: 11.5px; letter-spacing: -0.2px; color: #000; overflow: hidden; }
.defs { position: absolute; }
svg { flex: none; display: block; }
i { font-style: normal; }
span { white-space: nowrap; }
.app { width: 1920px; height: 1080px; display: flex; flex-direction: column; background: linear-gradient(90deg, #f0f0f0 0, #f3f3f3 30%, #fcfcfc 90%); }
.title { height: 23px; background: #fff; display: flex; align-items: center; padding: 0 15px 1px 2px; }
.title-text { margin-left: 5px; letter-spacing: -0.05px; }
.window-buttons { margin-left: auto; }
.menu { height: 27px; display: grid; grid-template-columns: 34px 36px 41px 75px 45px 64px 94px 72px 65px 60px; align-items: center; padding: 0 0 3px 12px; letter-spacing: -0.15px; }
.toolbar { height: 25px; display: flex; align-items: center; padding-bottom: 3px; }
.tb-standard { background: linear-gradient(#fafafa, #efefef) no-repeat 0 0 / 609px 24px; }
.tb-tools { background: linear-gradient(#fafafa, #efefef) no-repeat 0 0 / 517px 24px; padding-bottom: 2px; }
.grip { width: 2px; height: 15px; margin: 0 3px 0 5px; background: repeating-linear-gradient(#b8b8b8 0 2px, transparent 2px 4px); }
.tool { width: 22px; height: 22px; display: flex; align-items: center; justify-content: center; flex: none; }
.tool svg { width: 16px; height: 16px; }
.on { border: 1px solid #0078d7; background: #d9eafa; }
.sep { width: 1px; height: 14px; margin: 0 3px 0 2px; background: #b9b9b9; }
.sep-wide { margin: 0 3px 0 4px; }
.drop { width: 9px; display: flex; justify-content: center; }
.drop svg { width: 8px; height: 16px; }
.drop-wide { width: 11px; }
.combo { width: 148px; height: 21px; border: 1px solid #707070; background: #fff; display: flex; align-items: center; justify-content: space-between; padding: 0 4px 2px 2px; letter-spacing: -0.4px; }
.overflow { width: 11px; height: 24px; margin: 0 0 0 2px; align-self: flex-start; flex: none; background: linear-gradient(#efefef, #a5a5a5); }
.overflow-far { margin-left: 3px; }
.workspace { height: 920px; display: flex; }
.panel-head { height: 20px; display: flex; align-items: center; padding: 0 5px 0 4px; background: linear-gradient(90deg, #bccbda, #d7e5f2); }
.panel-head .pin { margin: 0 8px 0 auto; }
.toc { width: 200px; display: flex; flex-direction: column; }
.toc-tools { height: 26px; display: flex; align-items: center; padding-left: 4px; }
.sep-toc { margin: 0 3px 0 2px; }
.toc-tree { width: 199px; height: 873px; border: 1px solid #828790; background: #fff; padding-top: 1px; }
.toc-row { height: 18px; display: flex; align-items: center; padding-left: 8px; }
.toc-row .exp { margin: 3px 6px 0 0; }
.toc-row .ico { width: 16px; margin-right: 5px; }
.toc-row strong { letter-spacing: -0.45px; }
.toc-child { padding-left: 27px; }
.toc-row .check { width: 11px; margin: 0 6px 0 2px; }
.selected { background: #0078d7; color: #fff; line-height: 18px; padding: 0 2px; letter-spacing: -0.1px; }
.legend-value { padding-left: 82px; height: 18px; line-height: 18px; }
.legend { display: flex; padding-left: 59px; }
.ramp { width: 13px; height: 36px; background: linear-gradient(#f5f5f5, #000); }
.ramp-labels { display: flex; flex-direction: column; gap: 20px; margin: -2px 0 0 5px; line-height: 16px; letter-spacing: -0.1px; }
.map { width: 1015px; height: 919px; margin-left: 4px; border-left: 1px solid #aaa; padding-top: 1px; }
.map-row { height: 901px; display: flex; border-top: 1px solid #6b6b6b; border-left: 1px solid #6b6b6b; }
.canvas { width: 996px; height: 900px; background: #fff; padding: 138px 0 0 184px; border-right: 1px solid #e3e3e3; border-bottom: 1px solid #e3e3e3; }
.vscroll { width: 14px; margin-left: 0; display: flex; flex-direction: column; align-items: center; justify-content: space-between; padding: 6px 0; background: #f0f0f0; }
.vthumb { width: 14px; height: 865px; background: #cdcdcd; }
.map-foot { height: 16px; display: flex; align-items: center; border-left: 1px solid #6b6b6b; border-bottom: 1px solid #ddd; background: #f0f0f0; }
.view-on { width: 15px; height: 12px; background: #cce4f7; border: 1px solid #99c9ef; display: flex; align-items: center; justify-content: center; align-self: flex-start; }
.page-ico { margin: 0 0 3px 4px; }
.foot-sep { width: 1px; height: 10px; background: #777; margin: 0 8px 3px 5px; }
.refresh { margin-bottom: 3px; }
.pause { margin: 0 18px 3px 7px; }
.foot-left { margin-right: 5px; }
.hthumb { width: 885px; height: 14px; background: #cdcdcd; }
.foot-right { margin-left: 7px; }
.results { width: 674px; margin-left: 5px; }
.results .panel-head { padding-bottom: 1px; }
.res-box { height: 879px; border: 1px solid #828790; background: #fff; padding: 0 1px 0 0; display: flex; flex-direction: column; }
.res-tree { flex: 1; overflow: hidden; }
.row { height: 18px; display: flex; align-items: center; position: relative; }
.row .exp { width: 9px; flex: none; margin: 4px 6px 0 8px; }
.ri { width: 16px; height: 16px; margin-right: 5px; }
.l1 { padding-left: 19px; }
.l2 { padding-left: 38px; }
.l3 { padding-left: 57px; }
.output { letter-spacing: -0.06px; }
.executing { letter-spacing: -0.17px; }
.warning { letter-spacing: -0.1px; }
.focus { background: #f0f0f0; line-height: 18px; margin-left: -2px; padding: 0 2px; }
.row a { color: #00f; text-decoration: underline; }
.marked::after { content: ""; position: absolute; left: 72px; top: -4px; width: 237px; height: 27px; border: 5px solid #ed1c24; z-index: 1; }
.res-scroll { height: 18px; display: flex; align-items: center; padding: 1px 6px 1px; background: #f0f0f0; border-bottom: 1px solid #fff; }
.res-thumb { width: 412px; height: 15px; margin: 0 auto 0 6px; background: #cdcdcd; }
.tabs { display: flex; padding-left: 2px; }
.tab { width: 88px; height: 19px; display: flex; align-items: center; border: 1px solid #999; border-top: 0; border-radius: 0 0 4px 4px; padding: 0 0 1px 4px; color: #777; background: #f3f3f3; letter-spacing: -0.15px; }
.tab span { margin-left: 3px; }
.tab.active { width: 65px; background: #fff; color: #000; letter-spacing: -0.35px; }
.dock { width: 21px; padding: 2px 0 0 2px; }
.dock-tab { width: 20px; border: 1px solid #999; border-right: 0; border-radius: 5px 0 0 5px; background: #f4f4f4; display: flex; flex-direction: column; align-items: center; padding: 4px 2px 0 0; color: #777; font: 12px "Liberation Sans", Arial, sans-serif; letter-spacing: 0.4px; }
.dock-tab span { writing-mode: vertical-rl; margin-top: 3px; }
.cat { height: 72px; }
.sea { height: 67px; }
.status { height: 20px; background: #f0f0f0; display: flex; padding: 1px 0 0 1515px; gap: 2px; }
.cell { border: 1px solid #f7f7f7; height: 18px; }
.c1 { width: 127px; }
.c2 { width: 18px; }
.c3 { flex: 1; padding-left: 3px; line-height: 17px; letter-spacing: -0.26px; }
.taskbar { height: 40px; background: #050a10; display: flex; }
.task { width: 48px; height: 40px; display: flex; align-items: center; justify-content: center; }
.edge { margin: 0 1px 0 3px; }
.open { background: linear-gradient(#76b9ed, #76b9ed) no-repeat 4px 38px / 40px 2px; }
.current { background: #3a3d42; border-bottom: 2px solid #76b9ed; margin-left: 2px; }
.pad { margin-left: 1px; }
.tray { margin-left: auto; display: flex; align-items: center; color: #fff; }
.tray > svg { margin-right: 18px; }
.tray > svg + svg { margin-right: 16px; }
.tray > svg + svg + svg { margin-right: 9px; }
.clock { width: 60px; display: flex; flex-direction: column; align-items: center; line-height: 18px; letter-spacing: -0.35px; padding-bottom: 1px; }
.peek { width: 1px; height: 40px; background: #555; margin: 0 3px 0 3px; }
```
